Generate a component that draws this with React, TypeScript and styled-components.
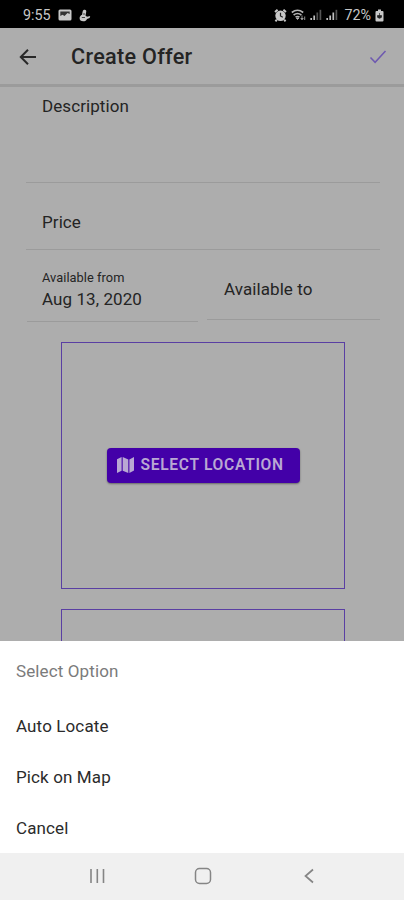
import React from "react";
import styled, { createGlobalStyle } from "styled-components";

const GlobalStyle = createGlobalStyle`
  * { box-sizing: border-box; }
  body { margin: 0; background: #adadad; font-family: Roboto, "Liberation Sans", sans-serif; }
`;

const Screen = styled.div`
  width: 404px;
  height: 900px;
  display: flex;
  flex-direction: column;
  overflow: hidden;
  background: #adadad;
  color: #242424;
`;

const StatusBar = styled.div`
  flex: 0 0 28px;
  display: flex;
  align-items: center;
  justify-content: space-between;
  padding: 2px 20px 0 23px;
  background: #000;
  color: #c8c8c8;
`;

const StatusGroup = styled.div<{ $gap: number }>`
  display: flex;
  align-items: center;
  gap: ${(p) => p.$gap}px;
`;

const StatusText = styled.span<{ $left?: number }>`
  margin-left: ${(p) => p.$left ?? 0}px;
  font-size: 14.3px;
  line-height: 16px;
`;

const AppBar = styled.header`
  flex: 0 0 59px;
  display: flex;
  align-items: center;
  padding: 1px 17px 0 19px;
  border-bottom: 3px solid #9b9b9b;
`;

const Title = styled.h1`
  flex: 1;
  margin: 0 0 0 34px;
  font-size: 21.6px;
  line-height: 28px;
  font-weight: 500;
  letter-spacing: 0.3px;
`;

const Form = styled.main`
  flex: 1;
  min-height: 0;
  overflow: hidden;
`;

const Field = styled.div<{ $height: number; $top: number }>`
  height: ${(p) => p.$height}px;
  margin: 0 24px 0 26px;
  padding: ${(p) => p.$top}px 0 0 16px;
  border-bottom: 1px solid #9b9b9b;
`;

const DateRow = styled.div`
  display: flex;
  align-items: flex-start;
  justify-content: space-between;
  height: 92px;
  margin: 0 24px 0 27px;
`;

const DateField = styled.div<{ $width: number; $height: number; $top: number; $left: number }>`
  width: ${(p) => p.$width}px;
  height: ${(p) => p.$height}px;
  padding: ${(p) => p.$top}px 0 0 ${(p) => p.$left}px;
  border-bottom: 1px solid #9b9b9b;
`;

const Label = styled.div`
  font-size: 17px;
  line-height: 20px;
  letter-spacing: 0.08px;
`;

const SmallLabel = styled.div`
  font-size: 12.8px;
  line-height: 16px;
  letter-spacing: 0.05px;
  margin-bottom: 3px;
`;

const Frame = styled.section`
  display: flex;
  align-items: center;
  justify-content: center;
  width: 284px;
  height: 247px;
  margin: 0 0 20px 61px;
  border: 1px solid #5a3fa3;
`;

const LocationButton = styled.button`
  display: flex;
  align-items: center;
  gap: 6px;
  width: 193px;
  height: 35px;
  margin-bottom: 1px;
  padding: 0 0 0 9px;
  border: 0;
  border-radius: 4px;
  background: #4300a8;
  color: #b9a8d3;
  box-shadow: 0 1px 2px rgba(0, 0, 0, 0.4);
  font: 600 15.6px/20px Roboto, sans-serif;
  letter-spacing: 0.7px;
  white-space: nowrap;
`;

const Sheet = styled.section`
  flex: 0 0 212px;
  padding: 5px 16px 0;
  background: #fff;
`;

const SheetTitle = styled.div`
  height: 53px;
  font-size: 17px;
  line-height: 51px;
  letter-spacing: 0.12px;
  color: #7b7b7b;
`;

const SheetOption = styled.div`
  height: 51px;
  font-size: 17px;
  line-height: 54px;
  letter-spacing: 0.12px;
  color: #2b2b2b;
`;

const NavBar = styled.nav`
  flex: 0 0 47px;
  display: flex;
  align-items: center;
  justify-content: space-between;
  padding: 0 85px 1px 87px;
  background: #f0f0f0;
`;

const Icon = styled.svg`
  display: block;
  flex: none;
`;

const ImageIcon = () => (
  <Icon width="14" height="12" viewBox="0 0 14 12">
    <rect x=".5" y=".5" width="13" height="11" rx="1.5" fill="#c8c8c8" />
    <path d="M2.300 7V2.500h9.400V5L9.500 4 6.500 7 4.500 5.800Z" fill="#333" />
  </Icon>
);

const TouchIcon = () => (
  <Icon width="12" height="13" viewBox="0 0 12 13">
    <path d="M5 .8C6.800.3 7.600 1.600 7.200 3L6.500 6.500l1.500 1.300 3.200-.8-.6 2-2.600 1C7.500 11.500 6.100 12.300 4.300 12.300 1.800 12.300.6 11 .6 9.200c0-1.500 1-2.700 2.500-3.400L3.500 3Q3.700 1.300 5 .8Z" fill="#c8c8c8" />
    <path d="M2.800 8.500H6M5 4v2" stroke="#444" strokeWidth="1" />
  </Icon>
);

const AlarmIcon = () => (
  <Icon width="13" height="13" viewBox="0 0 13 13">
    <path d="M1 3 3.600.8M12 3 9.400.8M2.800 10.700 1.500 12.300M10.200 10.700l1.300 1.600" stroke="#c8c8c8" strokeWidth="2" />
    <circle cx="6.500" cy="6.800" r="5.200" fill="#c8c8c8" />
    <path d="M6.500 3.800v3.200l2.300 1.200" fill="none" stroke="#222" strokeWidth="1.200" />
  </Icon>
);

const WifiIcon = () => (
  <Icon width="15" height="12" viewBox="0 0 15 12">
    <path d="M.8 3.500Q6.500-1 12.200 3.500M2.600 6Q6.500 3 10.400 6M4.500 8.200q2-1.500 4 0" fill="none" stroke="#b5b5b5" strokeWidth="1.600" />
    <path d="m5.300 9 1.200 1.500L8 9ZM11 6.500v4M9.700 9.200 11 10.700l1.300-1.500M13.700 11V7.500" fill="#b5b5b5" stroke="#b5b5b5" strokeWidth=".8" />
  </Icon>
);

const SignalIcon = ({ weak }: { weak?: boolean }) => (
  <Icon width="12" height="12" viewBox="0 0 12 12">
    <path d="M1.200 11V9M4.200 11V6.500" stroke="#c0c0c0" strokeWidth="1.700" />
    <path d="M7.300 11V3.500" stroke={weak ? "#505050" : "#c0c0c0"} strokeWidth="1.700" />
    <path d="M10.400 11V.8" stroke="#555" strokeWidth="1.700" />
  </Icon>
);

const BatteryIcon = () => (
  <Icon width="9" height="13" viewBox="0 0 9 13">
    <path d="M3 .5h3V2h1.500q1 0 1 1v8.500q0 1-1 1h-6q-1 0-1-1V3q0-1 1-1H3Z" fill="#c8c8c8" />
    <path d="M4.500 4v3.500M2.500 6.500h4v1.800q-2 2-4 0Z" fill="#222" stroke="#222" strokeWidth=".7" />
  </Icon>
);

const BackIcon = () => (
  <Icon width="18" height="18" viewBox="0 0 18 18" fill="none" stroke="#282828" strokeWidth="2">
    <path d="M17 9H2M9 1.800 1.800 9 9 16.200" />
  </Icon>
);

const CheckIcon = () => (
  <Icon width="19" height="16" viewBox="0 0 19 16">
    <path d="m2.500 8.500 4.600 4.800L17.500 2" fill="none" stroke="#6e59b0" strokeWidth="1.500" />
  </Icon>
);

const MapIcon = () => (
  <Icon width="19" height="18" viewBox="0 0 19 18" fill="#b9a8d3">
    <path d="M1 3.200 5.600 1v13.800L1 17ZM6.700 1l5.600 2.400V17l-5.600-2.200ZM13.400 3.400 18 1v13.500L13.400 17Z" />
  </Icon>
);

export default function App() {
  return (
    <>
      <GlobalStyle />
      <Screen>
        <StatusBar>
          <StatusGroup $gap={7}>
            <StatusText>9:55</StatusText>
            <ImageIcon />
            <TouchIcon />
          </StatusGroup>
          <StatusGroup $gap={4}>
            <AlarmIcon />
            <WifiIcon />
            <SignalIcon weak />
            <SignalIcon />
            <StatusText $left={2}>72%</StatusText>
            <BatteryIcon />
          </StatusGroup>
        </StatusBar>
        <AppBar>
          <BackIcon />
          <Title>Create Offer</Title>
          <CheckIcon />
        </AppBar>
        <Form>
          <Field $height={96} $top={9}><Label>Description</Label></Field>
          <Field $height={67} $top={29}><Label>Price</Label></Field>
          <DateRow>
            <DateField $width={171} $height={72} $top={20} $left={15}>
              <SmallLabel>Available from</SmallLabel>
              <Label>Aug 13, 2020</Label>
            </DateField>
            <DateField $width={173} $height={70} $top={29} $left={17}>
              <Label>Available to</Label>
            </DateField>
          </DateRow>
          <Frame>
            <LocationButton><MapIcon />SELECT LOCATION</LocationButton>
          </Frame>
          <Frame />
        </Form>
        <Sheet>
          <SheetTitle>Select Option</SheetTitle>
          <SheetOption>Auto Locate</SheetOption>
          <SheetOption>Pick on Map</SheetOption>
          <SheetOption>Cancel</SheetOption>
        </Sheet>
        <NavBar>
          <Icon width="20" height="18" viewBox="0 0 20 18" stroke="#858585" strokeWidth="1.600">
            <path d="M4 2v14M10.300 2v14M16.500 2v14" />
          </Icon>
          <Icon width="20" height="18" viewBox="0 0 20 18">
            <rect x="2.500" y="1.500" width="15" height="15" rx="4" fill="none" stroke="#858585" strokeWidth="1.500" />
          </Icon>
          <Icon width="20" height="18" viewBox="0 0 20 18">
            <path d="M14 2.500 6.500 9l7.500 6.500" fill="none" stroke="#858585" strokeWidth="1.700" />
          </Icon>
        </NavBar>
      </Screen>
    </>
  );
}
